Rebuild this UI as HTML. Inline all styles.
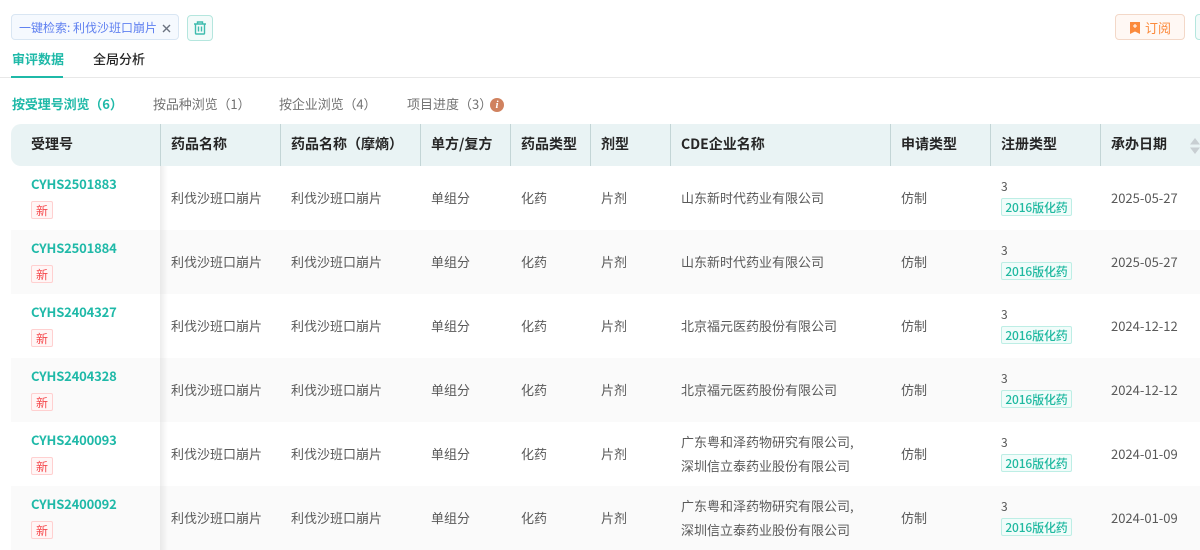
<!DOCTYPE html>
<html lang="zh">
<head>
<meta charset="utf-8">
<title>审评数据</title>
<style>
html,body{margin:0;padding:0;background:#fff}
body{width:1200px;height:550px;overflow:hidden;position:relative;font-family:"Noto Sans CJK SC","Liberation Sans",sans-serif;font-size:13px;color:#595959}
.a{position:absolute;white-space:nowrap}
.r{position:absolute;left:11px;width:1189px;height:64px}
.th{position:absolute;top:124px;height:42px;line-height:41px;font-size:14px;font-weight:700;color:#262626;white-space:nowrap}
.sep{position:absolute;top:124px;width:1px;height:42px;background:#c3d5d6}
.c{position:absolute;line-height:20px;white-space:nowrap}
.id{position:absolute;left:31px;font-size:13px;font-weight:700;color:#1fb9a8;line-height:20px;letter-spacing:-.17px}
.new{position:absolute;left:31px;width:22px;height:18px;box-sizing:border-box;border:1px solid #ffd0d0;background:#fff6f6;color:#f5484c;border-radius:2px;font-size:12px;line-height:17px;text-align:center}
.reg{position:absolute;left:1001px;width:71px;height:18px;box-sizing:border-box;border:1px solid #bdeee5;background:#f1fcfa;color:#1fb9a0;border-radius:2px;font-size:12px;font-weight:500;line-height:18px;text-align:center;letter-spacing:-.15px}
</style>
</head>
<body>
<!-- top bar -->
<div class="a" style="left:11px;top:14px;width:168px;height:26px;box-sizing:border-box;border:1px solid #d9e6f3;background:#f5f9fe;border-radius:4px"></div>
<div class="a" style="left:19px;top:19px;font-size:12px;line-height:18px;color:#5f80f0">一键检索: 利伐沙班口崩片</div>
<svg class="a" style="left:162px;top:24px" width="9" height="9" viewBox="0 0 9 9"><path d="M1 1L8 8M8 1L1 8" stroke="#6b7280" stroke-width="1.4"/></svg>
<div class="a" style="left:187px;top:15px;width:26px;height:26px;box-sizing:border-box;border:1px solid #b5e6de;background:#f3fbfa;border-radius:4px"></div>
<svg class="a" style="left:193px;top:21px" width="14" height="14" viewBox="0 0 14 14" fill="none" stroke="#3fbcae" stroke-width="1.4"><path d="M1 3H13M4.5 3V1H9.5V3M2.5 3V12.2Q2.5 13 3.3 13H10.7Q11.5 13 11.5 12.2V3M5.5 5.5V10.5M8.5 5.5V10.5"/></svg>

<div class="a" style="left:1115px;top:14px;width:70px;height:26px;box-sizing:border-box;border:1px solid #f3d8c8;background:#fff8f4;border-radius:4px"></div>
<svg class="a" style="left:1129px;top:22px" width="12" height="12" viewBox="0 0 12 12"><path d="M1 0H11V12L6 9.5L1 12Z" fill="#fb8a3c"/><path d="M6 2V6M4 4H8" stroke="#fff" stroke-width="1"/></svg>
<div class="a" style="left:1145px;top:18px;font-size:13px;line-height:20px;color:#fb8a3c">订阅</div>
<div class="a" style="left:1195px;top:14px;width:20px;height:26px;box-sizing:border-box;border:1px solid #b5e6de;background:#f3fbfa;border-radius:4px"></div>

<!-- tabs -->
<div class="a" style="left:12px;top:49px;font-size:13px;line-height:20px;font-weight:700;color:#1fb9a8">审评数据</div>
<div class="a" style="left:93px;top:49px;font-size:13px;line-height:20px;font-weight:500;color:#262626">全局分析</div>
<div class="a" style="left:0;top:77px;width:1200px;height:1px;background:#e8e8e8"></div>
<div class="a" style="left:11px;top:76px;width:52px;height:2px;background:#1fb9a8"></div>

<!-- subtabs -->
<div class="a" style="left:12px;top:94px;line-height:20px;font-weight:700;color:#1fb9a8;letter-spacing:-.1px">按受理号浏览（6）</div>
<div class="a" style="left:153px;top:94px;line-height:20px;color:#737373;letter-spacing:-.1px">按品种浏览（1）</div>
<div class="a" style="left:279px;top:94px;line-height:20px;color:#737373;letter-spacing:-.1px">按企业浏览（4）</div>
<div class="a" style="left:407px;top:94px;line-height:20px;color:#737373">项目进度（3）</div>
<div class="a" style="left:490px;top:98px;width:14px;height:14px;border-radius:50%;background:#d0825f;color:#fff;font:italic 700 11px/14px 'Liberation Serif',serif;text-align:center">i</div>

<!-- table header -->
<div class="a" style="left:11px;top:124px;width:1189px;height:42px;background:#e9f3f4;border-radius:10px 0 0 10px"></div>
<div class="sep" style="left:160px"></div><div class="sep" style="left:280px"></div><div class="sep" style="left:420px"></div><div class="sep" style="left:510px"></div><div class="sep" style="left:590px"></div><div class="sep" style="left:670px"></div><div class="sep" style="left:890px"></div><div class="sep" style="left:990px"></div><div class="sep" style="left:1100px"></div>
<div class="th" style="left:31px">受理号</div>
<div class="th" style="left:171px">药品名称</div>
<div class="th" style="left:291px">药品名称（摩熵）</div>
<div class="th" style="left:431px">单方/复方</div>
<div class="th" style="left:521px">药品类型</div>
<div class="th" style="left:601px">剂型</div>
<div class="th" style="left:681px">CDE企业名称</div>
<div class="th" style="left:901px">申请类型</div>
<div class="th" style="left:1001px">注册类型</div>
<div class="th" style="left:1111px">承办日期</div>
<svg class="a" style="left:1190px;top:138px" width="10" height="16" viewBox="0 0 10 16"><path d="M5 0L10 6.5H0Z M5 16L0 9.5H10Z" fill="#c8ced2"/></svg>

<!-- row backgrounds -->
<div class="r" style="top:230px;background:#fafafa"></div>
<div class="r" style="top:358px;background:#fafafa"></div>
<div class="r" style="top:486px;background:#fafafa"></div>

<!-- row 1 -->
<div class="id" style="top:174px">CYHS2501883</div><div class="new" style="top:201px">新</div>
<div class="c" style="left:171px;top:188px">利伐沙班口崩片</div><div class="c" style="left:291px;top:188px">利伐沙班口崩片</div><div class="c" style="left:431px;top:188px">单组分</div><div class="c" style="left:521px;top:188px">化药</div><div class="c" style="left:601px;top:188px">片剂</div><div class="c" style="left:681px;top:188px">山东新时代药业有限公司</div><div class="c" style="left:901px;top:188px">仿制</div><div class="c" style="left:1001px;top:177px;font-size:12px">3</div><div class="reg" style="top:198px">2016版化药</div><div class="c" style="left:1111px;top:188px">2025-05-27</div>
<!-- row 2 -->
<div class="id" style="top:238px">CYHS2501884</div><div class="new" style="top:265px">新</div>
<div class="c" style="left:171px;top:252px">利伐沙班口崩片</div><div class="c" style="left:291px;top:252px">利伐沙班口崩片</div><div class="c" style="left:431px;top:252px">单组分</div><div class="c" style="left:521px;top:252px">化药</div><div class="c" style="left:601px;top:252px">片剂</div><div class="c" style="left:681px;top:252px">山东新时代药业有限公司</div><div class="c" style="left:901px;top:252px">仿制</div><div class="c" style="left:1001px;top:241px;font-size:12px">3</div><div class="reg" style="top:262px">2016版化药</div><div class="c" style="left:1111px;top:252px">2025-05-27</div>
<!-- row 3 -->
<div class="id" style="top:302px">CYHS2404327</div><div class="new" style="top:329px">新</div>
<div class="c" style="left:171px;top:316px">利伐沙班口崩片</div><div class="c" style="left:291px;top:316px">利伐沙班口崩片</div><div class="c" style="left:431px;top:316px">单组分</div><div class="c" style="left:521px;top:316px">化药</div><div class="c" style="left:601px;top:316px">片剂</div><div class="c" style="left:681px;top:316px">北京福元医药股份有限公司</div><div class="c" style="left:901px;top:316px">仿制</div><div class="c" style="left:1001px;top:305px;font-size:12px">3</div><div class="reg" style="top:326px">2016版化药</div><div class="c" style="left:1111px;top:316px">2024-12-12</div>
<!-- row 4 -->
<div class="id" style="top:366px">CYHS2404328</div><div class="new" style="top:393px">新</div>
<div class="c" style="left:171px;top:380px">利伐沙班口崩片</div><div class="c" style="left:291px;top:380px">利伐沙班口崩片</div><div class="c" style="left:431px;top:380px">单组分</div><div class="c" style="left:521px;top:380px">化药</div><div class="c" style="left:601px;top:380px">片剂</div><div class="c" style="left:681px;top:380px">北京福元医药股份有限公司</div><div class="c" style="left:901px;top:380px">仿制</div><div class="c" style="left:1001px;top:369px;font-size:12px">3</div><div class="reg" style="top:390px">2016版化药</div><div class="c" style="left:1111px;top:380px">2024-12-12</div>
<!-- row 5 -->
<div class="id" style="top:430px">CYHS2400093</div><div class="new" style="top:457px">新</div>
<div class="c" style="left:171px;top:444px">利伐沙班口崩片</div><div class="c" style="left:291px;top:444px">利伐沙班口崩片</div><div class="c" style="left:431px;top:444px">单组分</div><div class="c" style="left:521px;top:444px">化药</div><div class="c" style="left:601px;top:444px">片剂</div><div class="c" style="left:681px;top:432px">广东粤和泽药物研究有限公司,</div><div class="c" style="left:681px;top:456px">深圳信立泰药业股份有限公司</div><div class="c" style="left:901px;top:444px">仿制</div><div class="c" style="left:1001px;top:433px;font-size:12px">3</div><div class="reg" style="top:454px">2016版化药</div><div class="c" style="left:1111px;top:444px">2024-01-09</div>
<!-- row 6 -->
<div class="id" style="top:494px">CYHS2400092</div><div class="new" style="top:521px">新</div>
<div class="c" style="left:171px;top:508px">利伐沙班口崩片</div><div class="c" style="left:291px;top:508px">利伐沙班口崩片</div><div class="c" style="left:431px;top:508px">单组分</div><div class="c" style="left:521px;top:508px">化药</div><div class="c" style="left:601px;top:508px">片剂</div><div class="c" style="left:681px;top:496px">广东粤和泽药物研究有限公司,</div><div class="c" style="left:681px;top:520px">深圳信立泰药业股份有限公司</div><div class="c" style="left:901px;top:508px">仿制</div><div class="c" style="left:1001px;top:497px;font-size:12px">3</div><div class="reg" style="top:518px">2016版化药</div><div class="c" style="left:1111px;top:508px">2024-01-09</div>

<!-- fixed column shadow -->
<div class="a" style="left:160px;top:166px;width:8px;height:384px;background:linear-gradient(to right,rgba(0,0,0,.07),rgba(0,0,0,0))"></div>
</body>
</html>
